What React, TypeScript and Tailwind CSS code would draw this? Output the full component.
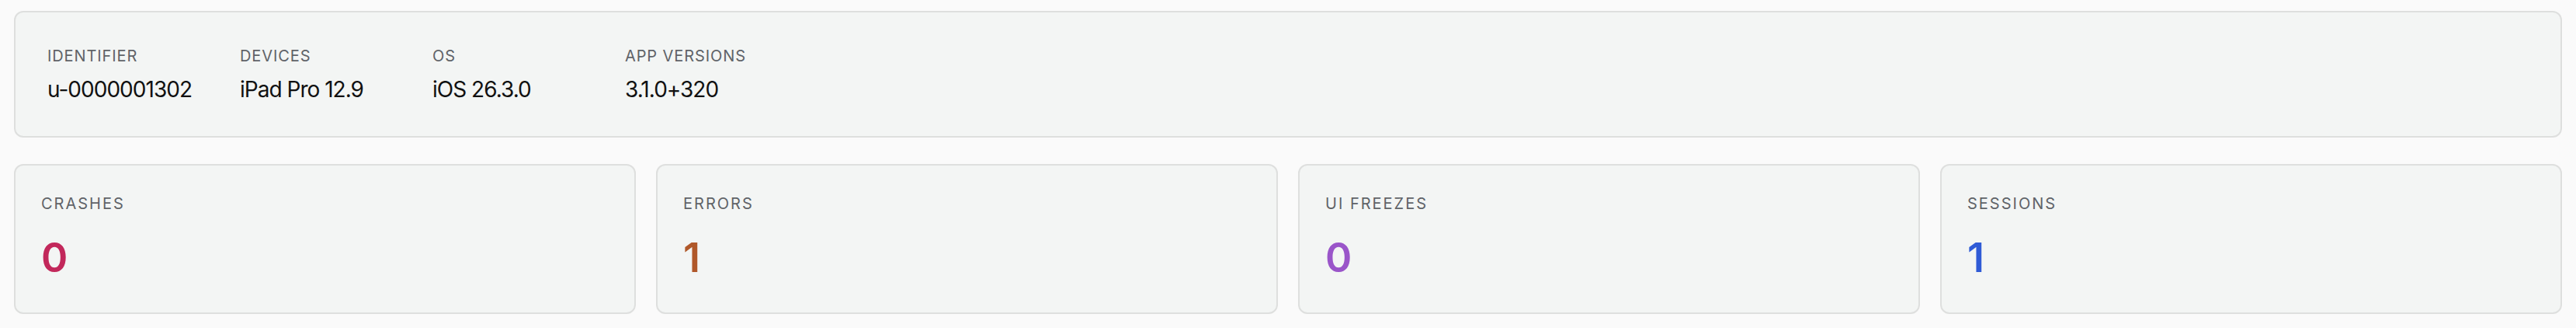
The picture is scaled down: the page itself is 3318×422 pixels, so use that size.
import React from "react";

type Meta = { label: string; value: string };
type Stat = { label: string; value: string; color: string };

const meta: Meta[] = [
  { label: "IDENTIFIER", value: "u-0000001302" },
  { label: "DEVICES", value: "iPad Pro 12.9" },
  { label: "OS", value: "iOS 26.3.0" },
  { label: "APP VERSIONS", value: "3.1.0+320" },
];

const stats: Stat[] = [
  { label: "CRASHES", value: "0", color: "text-[#c2285b]" },
  { label: "ERRORS", value: "1", color: "text-[#b0582a]" },
  { label: "UI FREEZES", value: "0", color: "text-[#9a55c9]" },
  { label: "SESSIONS", value: "1", color: "text-[#2f5bd6]" },
];

export default function App() {
  return (
    <div
      className="min-h-[422px] w-full bg-[#fafafa] px-[18px] pt-[14px] pb-[18px]"
      style={{ fontFamily: "Inter, 'Noto Sans', 'Liberation Sans', sans-serif" }}
    >
      {/* user summary */}
      <section className="rounded-[12px] border-2 border-[#dedfde] bg-[#f3f5f4] px-[41px] pt-[42px] pb-[40px]">
        <div className="flex">
          {meta.map((m) => (
            <div key={m.label} className="w-[248px] shrink-0">
              <div className="text-[20px] leading-[28px] tracking-[0.045em] text-[#606368]">
                {m.label}
              </div>
              <div className="mt-[9px] text-[28px] leading-[40px] tracking-[-0.035em] text-[#111111]">
                {m.value}
              </div>
            </div>
          ))}
        </div>
      </section>

      {/* counters */}
      <section className="mt-[34px] grid grid-cols-4 gap-[26px]">
        {stats.map((s) => (
          <div
            key={s.label}
            className="rounded-[12px] border-2 border-[#dedfde] bg-[#f3f5f4] px-[33px] pt-[35px] pb-[38px]"
          >
            <div className="text-[20px] leading-[28px] tracking-[0.1em] text-[#606368]">
              {s.label}
            </div>
            <div className={`mt-[24px] text-[52px] leading-[64px] font-semibold ${s.color}`}>
              {s.value}
            </div>
          </div>
        ))}
      </section>
    </div>
  );
}
